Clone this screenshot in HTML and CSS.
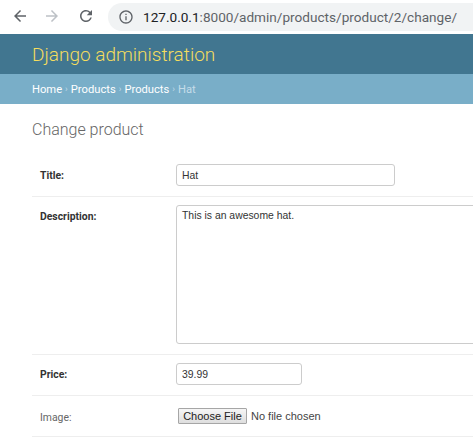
FILE: index.html
```html
<!DOCTYPE html>
<html lang="en">
<head>
<meta charset="utf-8">
<title>Change product | Django site admin</title>
<link rel="stylesheet" href="styles.css">
</head>
<body>
<div class="toolbar">
  <svg class="nav-icon back" viewBox="0 0 24 24" width="18" height="18"><path d="M20 11H7.83l5.59-5.59L12 4l-8 8 8 8 1.41-1.41L7.83 13H20v-2z"/></svg>
  <svg class="nav-icon fwd" viewBox="0 0 24 24" width="18" height="18"><path d="M4 11h12.17l-5.59-5.59L12 4l8 8-8 8-1.41-1.41L16.17 13H4v-2z"/></svg>
  <svg class="nav-icon reload" viewBox="0 0 24 24" width="18" height="18"><path d="M17.65 6.35A7.958 7.958 0 0 0 12 4c-4.42 0-7.99 3.58-7.99 8s3.57 8 7.99 8c3.73 0 6.84-2.55 7.73-6h-2.08A5.99 5.99 0 0 1 12 18c-3.31 0-6-2.69-6-6s2.69-6 6-6c1.66 0 3.14.69 4.22 1.78L13 11h7V4l-2.35 2.35z"/></svg>
  <div class="omnibox">
    <svg class="info" viewBox="0 0 24 24" width="16" height="16"><path d="M11 7h2v2h-2zm0 4h2v6h-2zm1-9C6.48 2 2 6.48 2 12s4.48 10 10 10 10-4.48 10-10S17.52 2 12 2zm0 18c-4.41 0-8-3.59-8-8s3.59-8 8-8 8 3.59 8 8-3.59 8-8 8z"/></svg>
    <span class="url"><span class="host">127.0.0.1</span>:8000/admin/products/product/2/change/</span>
  </div>
</div>

<div class="header">
  <h1 class="site-name">Django administration</h1>
</div>

<div class="breadcrumbs">
  <a href="#">Home</a><span class="sep">›</span><a href="#">Products</a><span class="sep">›</span><a href="#">Products</a><span class="sep">›</span><span class="current">Hat</span>
</div>

<div class="content">
  <h1 class="page-title">Change product</h1>
  <form>
    <fieldset class="module">
      <div class="form-row">
        <label class="required" for="id_title">Title:</label>
        <input class="text-input title-input" id="id_title" type="text" value="Hat">
      </div>
      <div class="form-row">
        <label class="required" for="id_description">Description:</label>
        <textarea class="text-area" id="id_description">This is an awesome hat.</textarea>
      </div>
      <div class="form-row">
        <label class="required" for="id_price">Price:</label>
        <input class="text-input price-input" id="id_price" type="text" value="39.99">
      </div>
      <div class="form-row">
        <label class="optional file-label" for="id_image">Image:</label>
        <div class="file-input">
          <button type="button" class="file-button" id="id_image">Choose File</button>
          <span class="file-status">No file chosen</span>
        </div>
      </div>
    </fieldset>
  </form>
</div>
</body>
</html>
```

FILE: styles.css
```css
html, body {
  margin: 0;
  padding: 0;
  background: #fff;
}

body {
  width: 473px;
  overflow: hidden;
  font-family: Roboto, "Liberation Sans", sans-serif;
  color: #333;
}

/* ---------- browser toolbar ---------- */
.toolbar {
  height: 34px;
  display: flex;
  align-items: center;
  padding-left: 11px;
  background: #fff;
  white-space: nowrap;
}

.nav-icon {
  flex: none;
  fill: #5f6368;
  margin-top: -2px;
}

.nav-icon.fwd {
  fill: #bdc1c6;
  margin-left: 14px;
}

.nav-icon.reload {
  margin-left: 16px;
}

.omnibox {
  flex: 1;
  min-width: 0;
  margin-left: 13px;
  height: 28px;
  border-radius: 14px 0 0 14px;
  background: #f1f3f4;
  display: flex;
  align-items: center;
  padding-left: 10px;
  overflow: hidden;
}

.info {
  flex: none;
  fill: #5f6368;
  margin-top: -1px;
}

.url {
  margin-left: 9px;
  font-family: Roboto, "Noto Sans", sans-serif;
  font-size: 13.6px;
  color: #5f6368;
  margin-top: -1px;
}

.host {
  color: #202124;
}

/* ---------- django header ---------- */
.header {
  height: 40px;
  padding: 0 32px;
  background: #417690;
  display: flex;
  align-items: center;
}

.site-name {
  margin: 0;
  font-size: 19px;
  font-weight: 300;
  color: #f5dd5d;
  line-height: 1;
}

.breadcrumbs {
  height: 30px;
  padding: 0 32px;
  background: #79aec8;
  display: flex;
  align-items: center;
  font-size: 11.2px;
  color: #c4dce8;
}

.breadcrumbs a {
  color: #fff;
  text-decoration: none;
}

.breadcrumbs .sep {
  padding: 0 3px;
  font-size: 9px;
}

/* ---------- content ---------- */
.content {
  padding: 16px 0 0 32px;
}

.page-title {
  margin: 0 0 16px;
  font-size: 16px;
  line-height: 20px;
  font-weight: 300;
  color: #666;
}

.module {
  margin: 0;
  padding: 0;
  border: 0;
  width: 620px;
}

.form-row {
  display: flex;
  align-items: flex-start;
  padding: 8px;
  border-bottom: 1px solid #eee;
}

.form-row label {
  flex: none;
  width: 126px;
  padding: 7px 10px 0 0;
  font-size: 10.4px;
  line-height: 1;
  color: #666;
}

.form-row label.required {
  font-weight: bold;
  color: #333;
}

.form-row label.file-label {
  padding-top: 9px;
}

.text-input {
  box-sizing: border-box;
  height: 22px;
  margin: 0 0 2px;
  padding: 0 5px;
  border: 1px solid #ccc;
  border-radius: 3px;
  font-family: "Liberation Sans", Arial, sans-serif;
  font-size: 10.4px;
  color: #333;
  background: #fff;
}

.title-input {
  width: 219px;
}

.price-input {
  width: 126px;
}

.text-area {
  box-sizing: border-box;
  width: 420px;
  height: 139px;
  margin: 0 0 2px;
  padding: 4px 5px;
  border: 1px solid #ccc;
  border-radius: 3px;
  resize: none;
  font-family: "Liberation Sans", Arial, sans-serif;
  font-size: 10.4px;
  color: #333;
}

.file-input {
  height: 24px;
  padding-left: 2px;
  display: flex;
  align-items: flex-start;
}

.file-button {
  box-sizing: border-box;
  width: 69px;
  height: 16px;
  margin: 4px 0 0;
  padding: 0;
  border: 1px solid #a6a6a6;
  border-radius: 1px;
  background: linear-gradient(#f6f6f6, #dedede);
  font-family: "Liberation Sans", Arial, sans-serif;
  font-size: 11px;
  line-height: 14px;
  color: #222;
}

.file-status {
  margin: 5px 0 0 4px;
  font-family: "Liberation Sans", Arial, sans-serif;
  font-size: 11px;
  line-height: 14px;
  color: #444;
}
```
